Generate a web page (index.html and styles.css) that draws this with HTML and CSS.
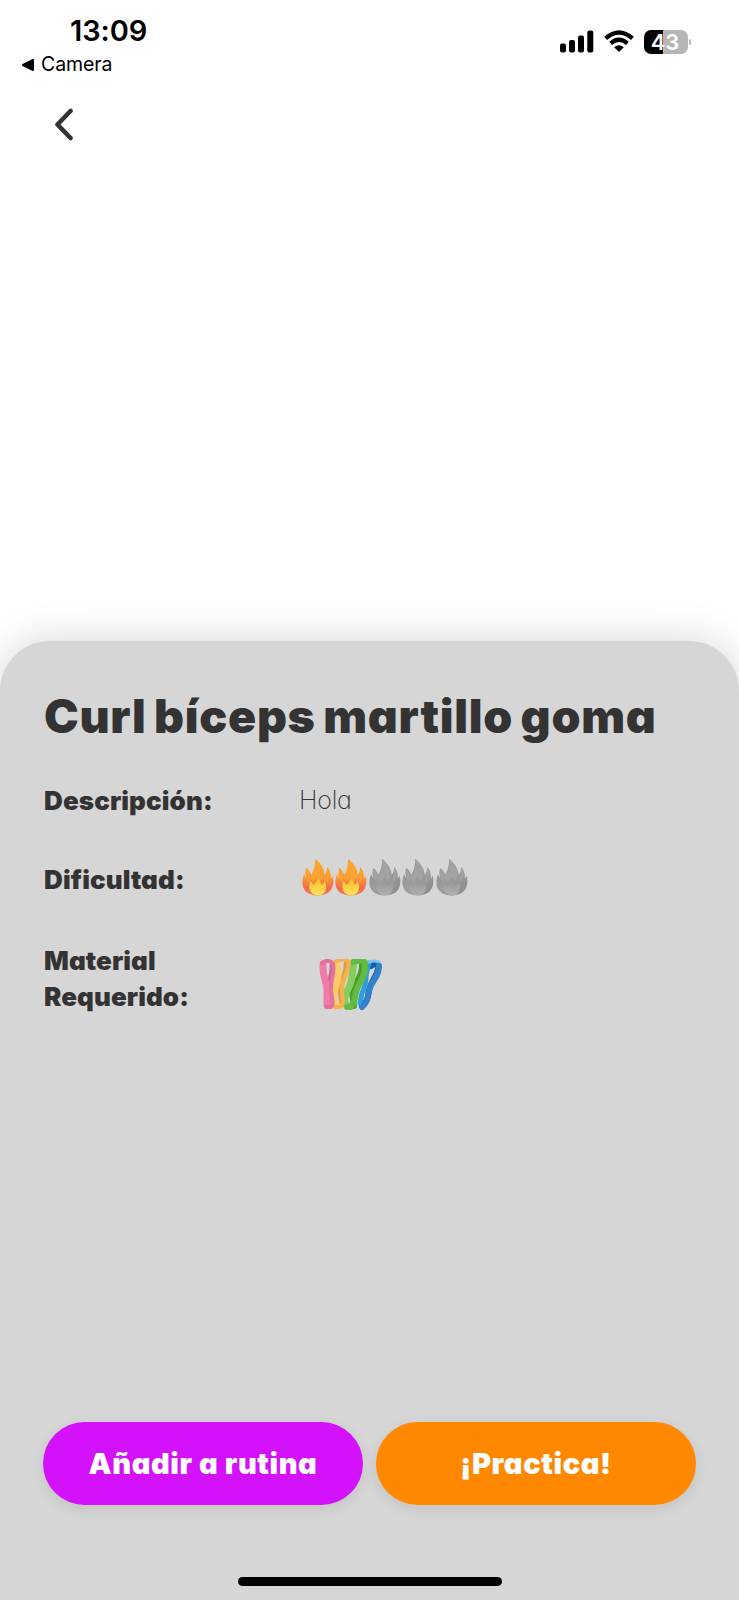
FILE: index.html
```
<!DOCTYPE html>
<html lang="es">
<head>
<meta charset="utf-8">
<title>Curl bíceps martillo goma</title>
<link rel="stylesheet" href="styles.css">
</head>
<body>
<svg class="defs" width="0" height="0" aria-hidden="true">
  <defs>
    <linearGradient id="hot" x1="0" y1="0" x2="0" y2="1">
      <stop offset="0" stop-color="#f9a51c"/><stop offset=".5" stop-color="#f99a38"/><stop offset=".8" stop-color="#f4694c"/><stop offset="1" stop-color="#f27d4e"/>
    </linearGradient>
    <linearGradient id="hotCore" x1="0" y1="0" x2="0" y2="1">
      <stop offset="0" stop-color="#f9bc28"/><stop offset="1" stop-color="#fbe45c"/>
    </linearGradient>
    <linearGradient id="cold" x1="0" y1="0" x2="1" y2="1">
      <stop offset="0" stop-color="#8d8d8d"/><stop offset=".5" stop-color="#9d9d9d"/><stop offset="1" stop-color="#898989"/>
    </linearGradient>
    <linearGradient id="coldCore" x1="0" y1="0" x2="0" y2="1">
      <stop offset="0" stop-color="#929292"/><stop offset="1" stop-color="#b0b0b0"/>
    </linearGradient>
    <symbol id="flame" viewBox="0 0 33 38">
      <path class="flame-body" d="M14 1C19 5 23 10 23.500 17C25 15 26 12 26 9C29 12 30 17 29.500 20C31 20 31.500 18 31.500 17C33.500 26 32 37 17 37.500C1 37 -1 26 3 16C3.500 18 4 19 5 20C4 16 4 13 5 10C7 11 9 14 10 17C13 12 14 7 14 1Z"/>
      <path class="flame-light" d="M14 1C19 5 22 11 22 18L19 24L16 18L12 24L9 20C14 13 15 7 14 1ZM5 10C7 12 9 15 9 19L8 25C5 20 4 15 5 10ZM26 9C29 13 29 18 26 24L24 22C26 17 27 13 26 9Z"/>
      <path class="flame-core" d="M17 20C18.500 22 19.500 24 20.500 27C22 26 22.500 25 23.500 23C27 30 24 37 17 37.300C9 37 6 30 9.500 23C10.500 25 11.500 26 12.500 27C14 25 16 23 17 20Z"/>
    </symbol>
  </defs>
</svg>
<div class="screen">
  <header class="status">
    <div class="status-left">
      <div class="time">13:09</div>
      <div class="back-app">
        <svg width="12" height="12" viewBox="0 0 12 12"><path d="M1 6L11 1V11Z" stroke="#000" stroke-width="2" stroke-linejoin="round"/></svg>
        <span>Camera</span>
      </div>
    </div>
    <div class="status-right">
      <svg width="34" height="23" viewBox="0 0 34 23"><rect y="13.500" width="6" height="9" rx="2"/><rect x="9" y="10" width="6" height="12.500" rx="2"/><rect x="18" y="5.500" width="6" height="17" rx="2"/><rect x="27.300" y=".5" width="6" height="22" rx="2"/></svg>
      <svg class="wifi" width="30" height="23" viewBox="0 0 30 23"><g fill="none" stroke="#000" stroke-width="4.200"><path d="M1.600 8.400Q15-3.500 28.400 8.400"/><path d="M6.600 13.400Q15 6 23.400 13.400"/></g><path d="M15 22L10.200 17.200Q15 13.200 19.800 17.200Z"/></svg>
      <div class="battery"><span>43</span></div>
    </div>
  </header>
  <nav class="nav">
    <svg width="20" height="34" viewBox="0 0 20 34"><path d="M16.500 3L3.500 16.500L16.500 30" fill="none" stroke="#333" stroke-width="4.600" stroke-linecap="round" stroke-linejoin="round"/></svg>
  </nav>
  <main class="sheet">
    <h1><span class="title">Curl bíceps martillo goma</span></h1>
    <dl class="details">
      <dt class="description">Descripción:</dt>
      <dd class="value">Hola</dd>
      <dt class="difficulty">Dificultad:</dt>
      <dd class="flames">
        <svg class="hot"><use href="#flame"/></svg><svg class="hot"><use href="#flame"/></svg><svg class="cold"><use href="#flame"/></svg><svg class="cold"><use href="#flame"/></svg><svg class="cold"><use href="#flame"/></svg>
      </dd>
      <dt class="material">Material<br>Requerido:</dt>
      <dd class="bands">
        <svg width="64" height="52" viewBox="0 0 64 52">
          <g stroke-linecap="round" stroke-linejoin="round">
            <path d="M52 7C56 4 60 5 59 10C57 19 52 22 50 31C49 39 48 43 43 47" fill="none" stroke="#155fa8" stroke-width="6"/>
            <path d="M50 4C45 17 49 24 43 34L41 44" fill="none" stroke="#2d9fda" stroke-width="5"/>
            <path d="M49 3C56 1 61 2 61 6" fill="none" stroke="#77c7ec" stroke-width="3"/>
            <path d="M60 7C60 20 52 21 50 32C49 40 47 45 43 48" fill="none" stroke="#3181cc" stroke-width="6"/>
            <path d="M43 5C44 17 36 23 33 33L35 47" fill="none" stroke="#489f2c" stroke-width="6"/>
            <path d="M35 4C32 15 35 20 29 30Q23 42 28 46" fill="none" stroke="#85cd5d" stroke-width="7"/>
            <path d="M34 3Q43-1 46 4C47 18 40 23 37 33Q36 43 32 48H28" fill="none" stroke="#62bc43" stroke-width="6"/>
            <path d="M27 5C28 15 21 21 21 31L23 46" fill="none" stroke="#e59a42" stroke-width="5"/>
            <path d="M17 5C20 15 20 21 16 30Q12 42 17 47" fill="none" stroke="#fbc968" stroke-width="7"/>
            <path d="M16 3Q26-2 30 3C29 16 22 22 23 33C24 41 25 45 21 48H16" fill="none" stroke="#f5b14d" stroke-width="4"/>
            <path d="M13 7C14 16 9 23 9 32L12 46" fill="none" stroke="#d26089" stroke-width="5"/>
            <path d="M4 6C3 19 9 23 8 34L8 46" fill="none" stroke="#ee7ca6" stroke-width="7"/>
            <path d="M3 4Q10-1 14 5C16 15 11 21 12 32C13 40 15 45 12 48H7" fill="none" stroke="#e5709b" stroke-width="4"/>
          </g>
        </svg>
      </dd>
    </dl>
    <div class="actions">
      <button class="add"><span>Añadir a rutina</span></button>
      <button class="practice"><span>¡Practica!</span></button>
    </div>
    <div class="home-bar"></div>
  </main>
</div>
</body>
</html>
```
FILE: styles.css
```
* { box-sizing: border-box; }
body { margin: 0; background: #fff; font-family: Inter, "Liberation Sans", sans-serif; }
svg { display: block; flex: none; }
.defs { position: absolute; }
.screen { width: 739px; height: 1600px; display: flex; flex-direction: column; overflow: hidden; background: #fff; }
.status { height: 88px; display: flex; justify-content: space-between; padding: 0 48px 0 22px; color: #000; }
.time { margin: 12px 0 0 48px; font-size: 29px; line-height: 38px; font-weight: 600; letter-spacing: -.1px; }
.back-app { display: flex; align-items: center; gap: 7px; font-size: 19.500px; line-height: 29px; letter-spacing: -.1px; }
.status-right { display: flex; align-items: flex-start; padding-top: 30px; }
.wifi { margin-left: 10px; }
.battery { position: relative; width: 44px; height: 24px; margin-left: 10px; margin-right: 3px; border-radius: 7px; background: linear-gradient(90deg, #000 19px, #b5b5b5 19px); color: #fff; font-size: 22px; font-weight: 600; line-height: 24px; text-align: center; letter-spacing: -.1px; text-indent: -2px; }
.battery::after { content: ""; position: absolute; left: 45px; top: 9px; width: 2px; height: 6px; border-radius: 0 3px 3px 0; background: #b5b5b5; }
.nav { height: 553px; padding: 20px 0 0 54px; }
.sheet { flex: 1; display: flex; flex-direction: column; padding: 44px 43px 14px; border-radius: 50px 50px 0 0; background: #d6d6d6; box-shadow: 0 0 40px rgba(0, 0, 0, .17); color: #333; font-feature-settings: "cv11"; }
h1 { margin: 0 0 0 1px; font-size: 46.500px; line-height: 62px; font-weight: 900; white-space: nowrap; }
.title { letter-spacing: .7px; word-spacing: -2.300px; }
.details { display: grid; grid-template-columns: 255px 1fr; grid-template-rows: 36px 36px 72px; row-gap: 43px; margin: 36px 0 0 1px; }
dt { font-size: 26px; line-height: 36px; font-weight: 900; letter-spacing: .1px; }
.material { padding-top: 2px; }
dd { margin: 0; }
.value { font-size: 25px; line-height: 34px; font-weight: 200; letter-spacing: -.2px; }
.flames { display: flex; padding-left: 2px; }
.flames svg { width: 33.400px; height: 38px; margin-top: -4px; }
.hot { --body: url(#hot); --light: #fba92c; --core: url(#hotCore); }
.cold { --body: url(#cold); --light: #a8a8a8; --core: url(#coldCore); }
.flame-body { fill: var(--body); }
.flame-light { fill: var(--light); opacity: .65; }
.flame-core { fill: var(--core); }
.bands { padding: 18px 0 0 20px; }
.actions { display: flex; gap: 13px; margin-top: auto; }
button { width: 320px; height: 83px; padding: 0; border: 0; border-radius: 42px; font: 900 29px/83px Inter, "Liberation Sans", sans-serif; letter-spacing: .6px; font-feature-settings: "cv11"; color: #fff; box-shadow: 0 4px 14px rgba(0, 0, 0, .09); }
.add { background: #d411fb; }
.practice { background: #ff8800; }
.home-bar { width: 264px; height: 9px; margin: 72px auto 0; border-radius: 5px; background: #000; }
```
